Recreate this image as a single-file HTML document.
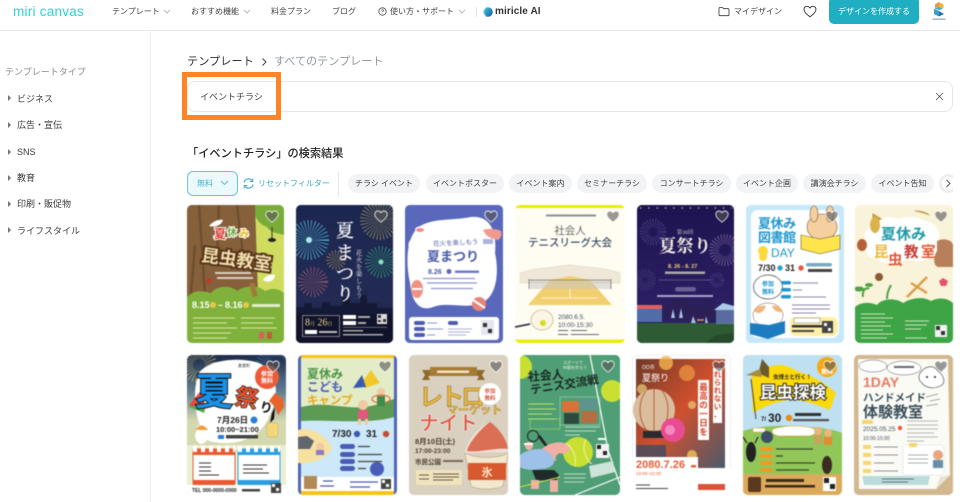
<!DOCTYPE html>
<html lang="ja"><head><meta charset="utf-8"><title>miri canvas</title>
<style>
*{box-sizing:border-box}
html,body{margin:0;padding:0;background:#fff}
body{width:960px;height:502px;position:relative;overflow:hidden;font-family:"Liberation Sans","Noto Sans CJK JP",sans-serif;color:#333}
.t{position:absolute;white-space:nowrap;line-height:1}
.nav{font-size:8px;color:#444;top:8px}
.side{font-size:9px;color:#3a3a3a;left:17px}
.tri{position:absolute;left:8px;width:0;height:0;border-left:3.5px solid #6d7680;border-top:3px solid transparent;border-bottom:3px solid transparent}
.chip{position:absolute;top:174px;height:19px;border-radius:10px;background:#f2f3f5;font-size:8px;color:#444;text-align:center;line-height:19px;white-space:nowrap}
.card{position:absolute;overflow:hidden;border-radius:5px;filter:blur(.4px)}
.card svg.c{position:absolute;left:0;top:0;display:block}
.card svg text{font-family:"Liberation Sans","Noto Sans CJK JP",sans-serif}
.card svg text.s{font-family:"Liberation Serif","Noto Serif CJK SC",serif}
.h{position:absolute;top:5px;width:14px;height:13px}
</style></head><body>
<svg width="0" height="0" style="position:absolute"><defs><symbol id="hrt" viewBox="0 0 14 13"><path d="M7 12.2C3 9 .8 6.900.8 4.200.8 2.300 2.300 1 4 1c1.300 0 2.300.6 3 1.700C7.700 1.600 8.700 1 10 1c1.700 0 3.200 1.300 3.200 3.200C13.200 6.900 11 9 7 12.200Z" fill="#555" fill-opacity=".6" stroke="#fff" stroke-opacity=".85" stroke-width=".9"/></symbol></defs></svg>

<!-- header -->
<div style="position:absolute;left:0;top:30px;width:960px;height:1px;background:#e8e8e8"></div>
<div style="position:absolute;left:150px;top:31px;width:1px;height:471px;background:#eee"></div>
<div class="t" style="left:13px;top:5px;font-size:13.500px;color:#2fd0d5;letter-spacing:.25px;font-weight:400">miri canvas</div>
<div class="t nav" style="left:112px">テンプレート</div>
<svg style="position:absolute;left:163px;top:9px" width="8" height="6"><path d="M1 1l3 3 3-3" fill="none" stroke="#aaa" stroke-width=".8"/></svg>
<div class="t nav" style="left:191px">おすすめ機能</div>
<svg style="position:absolute;left:243px;top:9px" width="8" height="6"><path d="M1 1l3 3 3-3" fill="none" stroke="#aaa" stroke-width=".8"/></svg>
<div class="t nav" style="left:271px">料金プラン</div>
<div class="t nav" style="left:332px">ブログ</div>
<svg style="position:absolute;left:378px;top:7px" width="9" height="9"><circle cx="4.500" cy="4.500" r="3.700" fill="none" stroke="#444" stroke-width=".8"/><path d="M3.500 3.500c.3-1 2-1 2 .1 0 .7-1 .8-1 1.500M4.500 6.200v.5" fill="none" stroke="#444" stroke-width=".7"/></svg>
<div class="t nav" style="left:390px">使い方・サポート</div>
<svg style="position:absolute;left:458px;top:9px" width="8" height="6"><path d="M1 1l3 3 3-3" fill="none" stroke="#aaa" stroke-width=".8"/></svg>
<div style="position:absolute;left:476px;top:7px;width:1px;height:10px;background:#e4e4e4"></div>
<svg style="position:absolute;left:482px;top:6px" width="12" height="12"><defs><linearGradient id="ma" x1="0" y1="0" x2="1" y2="1"><stop offset="0" stop-color="#47c6dc"/><stop offset="1" stop-color="#0f5fa8"/></linearGradient></defs><circle cx="6" cy="6" r="4.800" fill="url(#ma)"/><path d="M4 1.800a5 5 0 0 0 0 8.500" fill="none" stroke="#a8e6ee" stroke-width="1.200"/></svg>
<div class="t" style="left:495px;top:6.500px;font-size:10px;font-weight:700;color:#333;letter-spacing:.1px">miricle AI</div>
<svg style="position:absolute;left:718px;top:6px" width="12" height="11"><path d="M1 2.500c0-.6.400-1 1-1h2.500l1.200 1.200H10c.6 0 1 .4 1 1v5c0 .6-.4 1-1 1H2c-.6 0-1-.4-1-1Z" fill="none" stroke="#333" stroke-width=".8"/></svg>
<div class="t nav" style="left:734px">マイデザイン</div>
<svg style="position:absolute;left:803px;top:5px" width="14" height="13"><path d="M7 11.800C3.200 8.800 1 6.900 1 4.300 1 2.500 2.400 1.300 4 1.300c1.300 0 2.300.6 3 1.700.7-1.100 1.700-1.700 3-1.700 1.600 0 3 1.200 3 3 0 2.600-2.200 4.500-6 7.500Z" fill="none" stroke="#333" stroke-width=".9"/></svg>
<div style="position:absolute;left:829px;top:-3px;width:90px;height:26.500px;border-radius:5px;background:#20afc2;color:#fff;font-size:8px;text-align:center;line-height:29px">デザインを作成する</div>
<svg style="position:absolute;left:930px;top:1px" width="18" height="20"><path d="M9 1l4.500 2.500V7L9 8 5 5Z" fill="#f3b43c"/><path d="M5 3.500L9 1v4L5 7Z" fill="#ef8e4a"/><path d="M5 7l4-1 4 2-4 1-4-1Z" fill="#3fb1c9"/><path d="M4 8v5l5 2.500 5-2.500-5-3Z" fill="#2b6fb0"/><path d="M4 8l5 2.500V15L4 13Z" fill="#3f9fc2"/><rect x="2.500" y="17.500" width="13" height="1.300" fill="#9aa8c0"/></svg>

<!-- sidebar -->
<div class="t" style="left:5px;top:67.500px;font-size:9px;color:#8b8b8b">テンプレートタイプ</div>
<div class="tri" style="top:95px"></div><div class="t side" style="top:94.500px">ビジネス</div>
<div class="tri" style="top:122px"></div><div class="t side" style="top:121px">広告・宣伝</div>
<div class="tri" style="top:148.500px"></div><div class="t side" style="top:147.500px">SNS</div>
<div class="tri" style="top:175px"></div><div class="t side" style="top:174px">教育</div>
<div class="tri" style="top:201px"></div><div class="t side" style="top:200px">印刷・販促物</div>
<div class="tri" style="top:227px"></div><div class="t side" style="top:226.500px">ライフスタイル</div>

<!-- breadcrumb + search -->
<div class="t" style="left:187px;top:57px;font-size:11.200px;color:#333">テンプレート</div>
<svg style="position:absolute;left:261px;top:57px" width="7" height="10"><path d="M1.500 1.500l3.500 3.500-3.500 3.500" fill="none" stroke="#444" stroke-width="1"/></svg>
<div class="t" style="left:274px;top:57px;font-size:11.100px;color:#93989e">すべてのテンプレート</div>
<div style="position:absolute;left:187px;top:81px;width:766px;height:31px;border:1px solid #e6e6e6;border-radius:8px"></div>
<div style="position:absolute;left:182px;top:72px;width:99px;height:48px;border:5px solid #ff8426"></div>
<div class="t" style="left:200px;top:93px;font-size:9px;color:#444">イベントチラシ</div>
<svg style="position:absolute;left:935px;top:92px" width="9" height="9"><path d="M1 1l7 7M8 1L1 8" stroke="#555" stroke-width=".8"/></svg>

<div class="t" style="left:187px;top:149px;font-size:11.200px;color:#222;font-weight:500">「イベントチラシ」の検索結果</div>
<div style="position:absolute;left:187px;top:171px;width:51px;height:25px;background:#ebf9fc;border:1px solid #6dc3d8;border-radius:6px"></div>
<div class="t" style="left:197px;top:179.500px;font-size:8px;color:#4fb2ca">無料</div>
<svg style="position:absolute;left:220px;top:180px" width="9" height="6"><path d="M1 1l3.500 3.500L8 1" fill="none" stroke="#5bb6cd" stroke-width=".9"/></svg>
<svg style="position:absolute;left:242px;top:177px" width="13" height="13"><path d="M2 5.500A4.600 4.600 0 0 1 10 3.500M11 7.500A4.600 4.600 0 0 1 3 9.500" fill="none" stroke="#3aa9c0" stroke-width="1.100"/><path d="M10.800 1.500v3h-3M2.200 11.500v-3h3" fill="none" stroke="#3aa9c0" stroke-width="1"/></svg>
<div class="t" style="left:258px;top:179.500px;font-size:8px;color:#3aa9c0">リセットフィルター</div>
<div style="position:absolute;left:338px;top:172px;width:1px;height:24px;background:#e6e6e6"></div>
<div class="chip" style="left:348px;width:72px">チラシ イベント</div>
<div class="chip" style="left:426px;width:78px">イベントポスター</div>
<div class="chip" style="left:509px;width:63px">イベント案内</div>
<div class="chip" style="left:577px;width:70px">セミナーチラシ</div>
<div class="chip" style="left:652px;width:79px">コンサートチラシ</div>
<div class="chip" style="left:736px;width:62px">イベント企画</div>
<div class="chip" style="left:803px;width:63px">講演会チラシ</div>
<div class="chip" style="left:871px;width:63px">イベント告知</div>
<div style="position:absolute;left:939px;top:174px;width:14px;height:19px;overflow:hidden"><div style="width:19px;height:19px;border-radius:50%;background:#fff;border:3px solid #eceef0"></div><svg style="position:absolute;left:6px;top:5px" width="7" height="9"><path d="M1.500 1l3.500 3.500L1.500 8" fill="none" stroke="#555" stroke-width="1"/></svg></div>

<!-- CARD 1 -->
<div class="card" style="left:187px;top:205px;width:97px;height:138px;background:#80b23b">
<svg class="c" width="97" height="138">
<rect width="97" height="138" fill="#cfdc60"/><path d="M68 0H97V30C90 28 84 28 80 22 74 20 70 16 68 10Z" fill="#79ab38"/>
<path d="M0 0H68L71 90 0 95Z" fill="#85603a"/><path d="M12 0L18 90M32 0L30 60M50 0L56 50M8 40L4 90" stroke="#6a4c2f" stroke-width="2" fill="none"/>
<path d="M0 92C8 84 16 86 24 88 30 80 44 80 50 86 58 80 72 80 78 86 86 82 92 84 97 88V138H0Z" fill="#80b23b"/>
<path d="M22 21c4-5 10-7 14-6-1 4-6 8-14 6Z" fill="#fff"/><path d="M76 75c3-5 9-6 12-5 0 5-6 9-12 5Z" fill="#fff"/>
<path d="M85 22v12" stroke="#333"/><ellipse cx="85" cy="35" rx="4" ry="2" fill="#222"/>
<circle cx="22" cy="76" r="2.500" fill="#c4352a"/><rect x="64" y="78" width="5" height="14" fill="#a07a3a" transform="rotate(-15 66 85)"/>
<text x="27" y="33" font-size="12" font-weight="700" fill="#d6362a" stroke="#fff" stroke-width="2" paint-order="stroke">夏</text>
<text x="40" y="31" font-size="10" font-weight="700" fill="#6ea83a" stroke="#fff" stroke-width="2" paint-order="stroke">休</text>
<text x="52" y="32" font-size="10" font-weight="700" fill="#e9b91e" stroke="#fff" stroke-width="2" paint-order="stroke">み</text>
<text transform="translate(14 56) rotate(8)" font-size="17.500" font-weight="700" fill="#f1dfae" stroke="#57351b" stroke-width="4" paint-order="stroke">昆虫教室</text>
<rect x="28" y="67" width="36" height="2" fill="#fff" opacity=".7"/><rect x="30" y="72" width="36" height="2" fill="#fff" opacity=".7"/>
<text x="5" y="103" font-size="9" font-weight="700" fill="#fff">8.15</text><circle cx="26" cy="100" r="3" fill="#e4c94a"/><text x="31" y="103" font-size="8" font-weight="700" fill="#fff">~</text><text x="38" y="103" font-size="9" font-weight="700" fill="#fff">8.16</text><circle cx="59" cy="100" r="3" fill="#e4c94a"/><rect x="65" y="99" width="28" height="3" fill="#fff" opacity=".75"/>
<path d="M6 113H48M54 113H88M6 118H40M54 118H86M6 123H50M54 123H90M6 128H44M6 133H40" stroke="#d8e8a8" stroke-width="1"/>
<rect x="72" y="127" width="5" height="7" fill="#d0655a"/><rect x="80" y="127" width="5" height="7" fill="#b2643a"/>
</svg><svg class="h" style="left:78px"><use href="#hrt"/></svg></div>

<!-- CARD 2 -->
<div class="card" style="left:296px;top:205px;width:97px;height:138px;background:#1a2347">
<svg class="c" width="97" height="138">
<defs><linearGradient id="g2" x1="0" y1="0" x2="0" y2="1"><stop offset="0" stop-color="#1c2750"/><stop offset=".7" stop-color="#232b54"/><stop offset="1" stop-color="#14172e"/></linearGradient></defs>
<rect width="97" height="138" fill="url(#g2)"/>
<circle cx="13" cy="35" r="10" fill="none" stroke="#4fb0cf" stroke-width="20" stroke-dasharray=".5 1.500"/><circle cx="13" cy="35" r="3" fill="#a8eaf5"/>
<circle cx="84" cy="15" r="10" fill="none" stroke="#b3a65a" stroke-width="20" stroke-dasharray=".4 1.500"/>
<circle cx="85" cy="57" r="8" fill="none" stroke="#2f9a78" stroke-width="16" stroke-dasharray=".5 1.500"/><circle cx="85" cy="57" r="2.500" fill="#7fe8b4"/>
<circle cx="40" cy="55" r="5" fill="none" stroke="#b59a55" stroke-width="10" stroke-dasharray=".4 1.500"/>
<circle cx="17" cy="77" r="7.500" fill="none" stroke="#a5596f" stroke-width="15" stroke-dasharray=".5 1.600"/>
<path d="M0 110V102h8v-4h8v5h10v-6h8v4h12V92h8v6h10v-8h7v8h10v5h16v7Z" fill="#141a36"/>
<rect y="109" width="97" height="29" fill="#10132a"/>
<g fill="#fff" stroke="#fff" stroke-width=".25" text-anchor="middle"><text class="s" x="49" y="32" font-size="18">夏</text><text class="s" x="49" y="54" font-size="18">ま</text><text class="s" x="49" y="75" font-size="18">つ</text><text class="s" x="49" y="95" font-size="18">り</text></g>
<g fill="#e8e8ee" text-anchor="middle" font-size="6.500"><text class="s" x="63" y="50">花</text><text class="s" x="63" y="57">火</text><text class="s" x="63" y="64">を</text><text class="s" x="63" y="71">楽</text><text class="s" x="63" y="78">し</text><text class="s" x="63" y="85">も</text><text class="s" x="63" y="92">う</text></g>
<rect x="6.500" y="110.500" width="37" height="21" fill="none" stroke="#e6e6e6" stroke-width=".5"/>
<text class="s" x="9" y="120.500" font-size="10" fill="#f1d98a">8<tspan font-size="5">月</tspan> 26<tspan font-size="5">日</tspan></text>
<rect x="9" y="125" width="12" height="4" fill="#fff"/><rect x="23" y="126" width="18" height="2" fill="#bbb"/>
<rect x="47" y="110" width="13" height="4" fill="#fff"/><rect x="47" y="116" width="13" height="4" fill="#fff"/><rect x="62" y="111" width="12" height="2" fill="#aaa"/><rect x="62" y="117" width="8" height="2" fill="#aaa"/>
<rect x="81" y="109" width="10" height="10" fill="#ddd"/><path d="M82 110h3v3h-3ZM87 114h3v3h-3ZM82 115h3v2h-3Z" fill="#333"/>
<rect x="47" y="122" width="44" height=".6" fill="#999"/><rect x="47" y="125" width="20" height="1.500" fill="#aaa"/><rect x="47" y="129" width="40" height="1.500" fill="#aaa"/>
</svg><svg class="h" style="left:78px"><use href="#hrt"/></svg></div>

<!-- CARD 3 -->
<div class="card" style="left:405px;top:205px;width:98px;height:138px;background:#5a68bb">
<svg class="c" width="98" height="138">
<rect width="98" height="138" fill="#5a68bb"/>
<path d="M10 26C20 12 48 16 66 12 86 10 92 28 90 48 94 66 92 88 80 96 64 106 44 96 28 102 12 108 6 92 5 78 1 60 1 38 10 26Z" fill="#fff"/>
<path d="M4 37c2-4 8-6 12-4 4 3 5 8 2 12-3 3-9 3-12 0-3-2-3-5-2-8Z" fill="#fff"/>
<path d="M10 24c3-4 8-3 12-1 2 3-1 6-5 6-3 0-7-2-7-5Z" fill="#fff"/><ellipse cx="15" cy="25" rx="4" ry="2" fill="#f28a8a"/>
<path d="M78 25c6-2 14-1 18 1 1 4 0 7-3 9-6-1-12-3-15-10Z" fill="#f09a8f"/>
<rect x="78" y="34" width="10" height="5" fill="#5a68bb" opacity=".5"/>
<ellipse cx="12" cy="84" rx="6" ry="9" fill="#ef9385"/><path d="M7 84h10" stroke="#fff" stroke-width="2"/>
<circle cx="74" cy="99" r="7" fill="#e5857a"/><path d="M68 95l12 8" stroke="#fff" stroke-width="2"/>
<text x="28" y="40" font-size="6.500" fill="#5360a8" transform="rotate(-3 50 38)">花火を楽しもう</text>
<text x="22" y="56" font-size="13" font-weight="700" fill="#4a5aa8">夏まつり</text>
<text x="23" y="69" font-size="7" font-weight="700" fill="#4a5aa8">8.26</text><circle cx="44" cy="66.500" r="2.500" fill="#5a68bb"/><rect x="50" y="65.500" width="24" height="2.500" fill="#6f7ac2"/>
<path d="M18 73.500H70M22 78H72M26 83.500H68" stroke="#8e97cf" stroke-width="1.200"/>
<rect x="4" y="112" width="90" height="23" rx="3" fill="#fff"/>
<rect x="9" y="116" width="11" height="4" rx="2" fill="#4d5cb0"/><rect x="9" y="122" width="11" height="4" rx="2" fill="#4d5cb0"/><rect x="9" y="128" width="11" height="4" rx="2" fill="#4d5cb0"/>
<path d="M22 118h10M22 124h16M22 130h8" stroke="#8e97cf"/><rect x="43" y="116" width="10" height="4" rx="2" fill="#4d5cb0"/><path d="M43 124h24M43 127h22M43 130h18" stroke="#8e97cf" stroke-width=".8"/>
<rect x="76" y="115" width="13" height="15" fill="#e4e7f2"/><path d="M78 118h4v4h-4ZM83 124h4v4h-4Z" fill="#333"/>
</svg><svg class="h" style="left:79px"><use href="#hrt"/></svg></div>

<!-- CARD 4 -->
<div class="card" style="left:515px;top:205px;width:110px;height:138px;background:#fffdf1">
<svg class="c" width="110" height="138">
<rect width="110" height="138" fill="#fffdf1"/><rect width="110" height="3" fill="#e8ee0a"/><rect y="134.500" width="110" height="3.500" fill="#e8ee0a"/>
<rect x="31" y="9.500" width="50" height="2" fill="#8a8f9a"/>
<text x="55" y="29" font-size="10.500" text-anchor="middle" fill="#666">社会人</text>
<text x="55" y="41" font-size="10.500" text-anchor="middle" fill="#3c4b66" font-weight="500">テニスリーグ大会</text>
<path d="M5 68L20 64 55 60 90 64 105 68V78H5Z" fill="#efe8d8" stroke="#d8d0bc" stroke-width=".5"/>
<path d="M35 75L55 71 75 75 97 100H13Z" fill="#f2cf6f"/>
<rect x="14" y="75" width="82" height="9" fill="#c9c7c2" opacity=".55"/><path d="M14 75H96M14 84V74M96 84V74" stroke="#555" stroke-width=".6"/>
<path d="M27 93H83M55 84V93" stroke="#fff" stroke-width=".7"/>
<ellipse cx="27" cy="115" rx="11" ry="10" fill="#fbf5e6" stroke="#c9b88e" stroke-width=".8"/><circle cx="28" cy="118" r="3" fill="#d5dd20"/><path d="M0 122l15-3" stroke="#2f3a50" stroke-width="1.800"/>
<text x="43" y="114" font-size="6.500" fill="#3c4b66">2080.6.5.</text><text x="43" y="122" font-size="6.500" fill="#3c4b66">10:00-15:30</text>
<path d="M43 125.500h10M56 125.500h16M43 129.500h10M56 129.500h28" stroke="#667" stroke-width="1"/>
</svg><svg class="h" style="left:91px"><use href="#hrt"/></svg></div>

<!-- CARD 5 -->
<div class="card" style="left:637px;top:205px;width:97px;height:138px;background:#1e1552">
<svg class="c" width="97" height="138">
<defs><linearGradient id="g5" x1="0" y1="0" x2="0" y2="1"><stop offset="0" stop-color="#1c1450"/><stop offset=".75" stop-color="#2d1f63"/></linearGradient></defs>
<rect width="97" height="138" fill="url(#g5)"/>
<path d="M3 3H95" stroke="#e8d46a" stroke-width="1.300" stroke-dasharray="1.300 7"/>
<circle cx="16" cy="27" r="9" fill="none" stroke="#4a3f86" stroke-width="9" stroke-dasharray=".7 1.500"/><circle cx="88" cy="45" r="11" fill="none" stroke="#6b5a92" stroke-width="10" stroke-dasharray=".8 1.600"/><circle cx="8" cy="75" r="7" fill="none" stroke="#3f3a78" stroke-width="8" stroke-dasharray=".7 1.500"/><circle cx="80" cy="75" r="5" fill="none" stroke="#4a3f86" stroke-width="5" stroke-dasharray=".7 1.500"/>
<text class="s" x="48" y="29" font-size="5.500" text-anchor="middle" fill="#ddd">第30回</text>
<text class="s" x="48" y="47" font-size="17.500" text-anchor="middle" fill="#f4f0e6" font-weight="700">夏祭り</text>
<text x="31" y="63" font-size="5.500" fill="#f1cf74" font-weight="700">8. 26 - 8. 27</text><rect x="28" y="66.500" width="40" height="2.500" fill="#aaa"/><path d="M22 75H74" stroke="#8d86b2" stroke-width=".5"/>
<rect x="38" y="82" width="21" height="4.500" rx="2.200" fill="#6a5f96"/><rect x="20" y="90" width="56" height="2" fill="#a8a3c2"/>
<path d="M0 112V104h10v-6h12v4h14v-8h16v6h14v-4h10v10h21v10Z" fill="#2a2056"/>
<path d="M0 118H97V138H0Z" fill="#2f5b34"/><path d="M70 138c4-8 14-10 27-10v10Z" fill="#254a2b"/>
<rect x="0" y="100" width="25" height="4" fill="#e35f5f"/><rect y="104" width="25" height="13" fill="#5e87c4" opacity=".75"/>
<path d="M77 105l9-7 11 3v4Z" fill="#a9cbe8"/><rect x="79" y="105" width="18" height="14" fill="#7a9ed0" opacity=".6"/>
<path d="M34 113l2-9 2 9ZM42 113l2-10 2 10ZM54 118l2-7 3 7ZM68 118l1-7 2 7Z" fill="#a6c3e0"/><rect x="60" y="114" width="7" height="2" fill="#b67b5a"/>
</svg><svg class="h" style="left:78px"><use href="#hrt"/></svg></div>

<!-- CARD 6 -->
<div class="card" style="left:746px;top:205px;width:98px;height:138px;background:#c6e8fb">
<svg class="c" width="98" height="138">
<rect x="5" y="5" width="88" height="128" rx="7" fill="#fff"/>
<text x="12" y="23" font-size="13" font-weight="700" fill="#1f96cd" letter-spacing="-.5">夏休み</text><text x="12" y="37" font-size="13" font-weight="700" fill="#1f96cd" letter-spacing="-.5">図書館</text>
<circle cx="17" cy="46" r="5" fill="#ffd83a"/><circle cx="17" cy="52" r="4" fill="#ffd83a"/><text x="25" y="52" font-size="12" fill="#1f96cd">DAY</text>
<ellipse cx="76" cy="22" rx="15" ry="13" fill="#f4cfa0" stroke="#7c5a3e" stroke-width=".6"/><ellipse cx="68" cy="9" rx="4" ry="8" fill="#f4cfa0" stroke="#7c5a3e" stroke-width=".6"/><ellipse cx="84" cy="9" rx="4" ry="8" fill="#f4cfa0" stroke="#7c5a3e" stroke-width=".6"/>
<path d="M55 30l19 4 20-4v14l-20 5-19-5Z" fill="#ffe44b" stroke="#6b5a3e" stroke-width=".6"/>
<text x="12" y="66" font-size="9" font-weight="700" fill="#222">7/30</text><circle cx="34" cy="63" r="2.700" fill="#2ba6c9"/><text x="39" y="66" font-size="9" font-weight="700" fill="#222">31</text><circle cx="55" cy="63" r="2.700" fill="#e8563f"/>
<rect x="60" y="58" width="26" height="3.500" rx="1.700" fill="#7aa9c2"/><rect x="62" y="64" width="24" height="3" fill="#444"/>
<ellipse cx="22" cy="82" rx="14.500" ry="12" fill="#fff" stroke="#444" stroke-width=".7"/>
<text x="22" y="81" font-size="6" text-anchor="middle" font-weight="700" fill="#1f96cd">参加</text><text x="22" y="89" font-size="6" text-anchor="middle" font-weight="700" fill="#1f96cd">無料</text>
<rect x="35" y="76" width="10" height="3.500" rx="1.700" fill="#1f96cd"/><rect x="35" y="83" width="10" height="3.500" rx="1.700" fill="#1f96cd"/><rect x="35" y="90" width="10" height="3.500" rx="1.700" fill="#1f96cd"/>
<path d="M47 78H72M47 85H56M47 92H80M46 100H84M46 104H84M46 108H70" stroke="#88a" stroke-width=".9"/>
<ellipse cx="22" cy="110" rx="15" ry="12" fill="#fff" stroke="#7c5a3e" stroke-width=".5"/><path d="M8 106c2-5 8-6 12-5-2 5-6 10-12 5ZM26 101c4-1 10 1 11 6-5 1-10-2-11-6Z" fill="#f0b77c"/>
<path d="M4 118l19 2 16-4v12l-17 6-18-5Z" fill="#1d7cc0"/>
<rect x="44" y="112" width="48" height="19" rx="6" fill="#fdeea8"/><rect x="48" y="113" width="26" height="5" fill="#fff" stroke="#555" stroke-width=".4"/><rect x="46" y="120" width="30" height="2.500" fill="#333"/><rect x="46" y="125" width="22" height="2" fill="#444"/><rect x="76" y="116" width="11" height="12" fill="#444"/><path d="M78 118h3v3h-3ZM82 123h3v3h-3Z" fill="#fff"/>
</svg><svg class="h" style="left:79px"><use href="#hrt"/></svg></div>

<!-- CARD 7 -->
<div class="card" style="left:855px;top:205px;width:98px;height:138px;background:#f9f3d9">
<svg class="c" width="98" height="138">
<rect width="98" height="138" fill="#f9f3d9"/>
<path d="M24 14c10-3 12-2 20 0 8-4 20-2 26 2 10 1 16 10 14 18 6 6 2 16-8 18-8 6-18 4-24 2-10 6-24 6-30 0-8 0-14-8-10-14-6-8 0-20 12-26Z" fill="#fff"/>
<path d="M82 36c8-4 16 0 16 4v22H84c-6 0-6-10-2-16Z" fill="#b77f5a"/>
<text x="26" y="34" font-size="15" font-weight="700" fill="#1d9aa6" letter-spacing="0">夏休み</text>
<text x="19" y="52" font-size="14.500" font-weight="700" fill="#ebb73e">昆</text><text x="33" y="60" font-size="14.500" font-weight="700" fill="#e15835">虫</text><text x="49" y="52" font-size="14.500" font-weight="700" fill="#c63a34">教</text><text x="66" y="52" font-size="14.500" font-weight="700" fill="#e15835">室</text>
<path d="M52 92l20-20M56 78l16 10" stroke="#dc9d4a" stroke-width="2.500"/>
<path d="M8 92c-1-8 4-10 6-8M32 94c0-8 3-12 4-14" stroke="#4fa048" stroke-width="2" fill="none"/><ellipse cx="4" cy="84" rx="5" ry="2.500" fill="#4fa048"/><ellipse cx="14" cy="80" rx="4" ry="2" fill="#4fa048"/><path d="M84 76l4-3 5 3-2 5h-5Z" fill="#e3546a"/>
<path d="M18 9l8 5-8 4ZM60 6c6 0 10 1 14 4" stroke="#b9913c" fill="#d0a84c"/><ellipse cx="20" cy="20" rx="5" ry="8" fill="#dcb34a"/><ellipse cx="7" cy="40" rx="5" ry="6" fill="#b45f36"/><ellipse cx="24" cy="72" rx="4" ry="4" fill="#8a5a34"/>
<path d="M0 102c4-4 14-6 22-2 4-6 18-8 26-2 8-5 20-7 28-2 8-4 16-3 22 2v40H0Z" fill="#3ea445"/>
<path d="M6 109H30M6 113H38M6 117H30M6 121H36M6 125H28M6 129H38M6 133H32M50 116H74M50 120H72M50 124H66M50 133H72" stroke="#cce5be" stroke-width="1"/>
<rect x="80" y="120" width="12" height="12" fill="#f3f3f3"/><path d="M81 121h4v4h-4ZM86 126h4v4h-4Z" fill="#333"/>
</svg><svg class="h" style="left:79px"><use href="#hrt"/></svg></div>

<!-- CARD 8 -->
<div class="card" style="left:187px;top:355px;width:99px;height:140px;background:#fff;box-shadow:inset 0 0 0 1px #eee">
<svg class="c" width="99" height="140">
<defs><linearGradient id="g8" x1="0" y1="0" x2="0" y2="1"><stop offset="0" stop-color="#1b2a4a"/><stop offset=".4" stop-color="#65828f"/><stop offset=".7" stop-color="#d4d8ae"/></linearGradient></defs>
<rect width="99" height="94" fill="url(#g8)"/>
<circle cx="90" cy="12" r="16" fill="none" stroke="#4c6fb0" stroke-width="12" stroke-dasharray=".6 2"/><circle cx="12" cy="10" r="12" fill="none" stroke="#c7b46a" stroke-width="12" stroke-dasharray=".6 2"/>
<path d="M12 18C22 4 54 2 72 8 90 16 94 40 82 62 72 86 44 92 22 86 8 70 4 38 12 18Z" fill="#fff"/>
<path d="M2 50l14-17 2 22Z" fill="#e74b3d"/><path d="M2 50l16 5-1 3-15-6Z" fill="#4bb24a"/>
<text x="8" y="50" font-size="38" font-weight="700" fill="#1991e6" stroke="#111" stroke-width="1.800" paint-order="stroke">夏</text>
<text transform="translate(47 49) rotate(10)" font-size="23" font-weight="700" fill="#e8542c" stroke="#111" stroke-width="1.200" paint-order="stroke">祭</text>
<text transform="translate(72 56) rotate(10)" font-size="13" font-weight="700" fill="#111">り</text>
<circle cx="80" cy="22" r="12" fill="#ec5b3a"/><text x="80" y="21" font-size="6" font-weight="700" text-anchor="middle" fill="#fff">参加</text><text x="80" y="28" font-size="6" font-weight="700" text-anchor="middle" fill="#fff">無料</text>
<text x="57" y="12" font-size="4" text-anchor="middle" fill="#222">美里町</text>
<path d="M88 38l8 6 1 8-6 8-3-8-6-6Z" fill="#e8642a"/><path d="M88 52l-1 12-4 4 2-10Z" fill="#111"/>
<text x="30" y="68" font-size="8.500" font-weight="700" fill="#222">7月26日</text><circle cx="67" cy="65" r="3.500" fill="#2b7fd0"/>
<text x="29" y="77" font-size="7.500" font-weight="700" fill="#222">10:00~21:00</text><rect x="31" y="80" width="6" height="4" fill="#2b7fd0"/><rect x="39" y="80" width="32" height="3.500" fill="#444"/>
<path d="M11 70l8 5 2 8c-1 5-6 6-8 6-5-3-6-9-4-12Z" fill="#fff"/><path d="M9 75c3-6 8-6 12 0Z" fill="#ef9f42"/>
<rect x="80" y="68" width="11" height="14" rx="2" fill="#f2d77a" stroke="#c9ad5a" stroke-width=".5"/>
<rect y="90" width="99" height="50" fill="#ecf0d3"/>
<rect x="6" y="94" width="42" height="36" rx="2" fill="#fff" stroke="#ea5a32" stroke-width="1"/><path d="M6 94h42v6H6Z" fill="#ea5a32"/><path d="M6 94h42" stroke="#fff" stroke-width="6" stroke-dasharray="4 4"/>
<rect x="51" y="94" width="42" height="36" rx="2" fill="#fff" stroke="#2d9ee0" stroke-width="1"/><path d="M51 94h42v6H51Z" fill="#2d9ee0"/><path d="M51 94h42" stroke="#fff" stroke-width="6" stroke-dasharray="4 4"/>
<path d="M12 108H24M12 112H24M12 116H24M12 120H32M56 110H80M56 114H76M56 118H82" stroke="#333" stroke-width="1"/>
<rect x="6" y="125" width="42" height="5" fill="#ea5a32"/><rect x="51" y="125" width="42" height="5" fill="#2d9ee0"/>
<rect y="130" width="99" height="10" fill="#fff"/><text x="5" y="137" font-size="5" fill="#222" font-weight="700">TEL 000-0000-0000</text><rect x="55" y="134" width="18" height="2.500" fill="#444"/><rect x="84" y="128" width="10" height="10" fill="#444"/><path d="M85 129h3v3h-3ZM89 133h3v3h-3Z" fill="#fff"/>
</svg><svg class="h" style="left:79px"><use href="#hrt"/></svg></div>

<!-- CARD 9 -->
<div class="card" style="left:298px;top:355px;width:99px;height:140px;background:#cde8f8">
<svg class="c" width="99" height="140">
<rect width="99" height="140" fill="#cde8f8"/><rect width="99" height="3" fill="#f6c31c"/><rect y="136" width="99" height="4" fill="#f6c31c"/><rect x="0" width="3" height="140" fill="#5165b8"/><rect x="96" width="3" height="140" fill="#5165b8"/>
<path d="M3 3H96V60C80 68 50 58 30 62 16 64 10 62 3 60Z" fill="#e2ecc6"/>
<path d="M3 52C20 48 30 50 50 52 70 54 84 48 96 44V62C70 70 30 64 3 66Z" fill="#5d9a54"/>
<path d="M62 30L73 15 82 28 67 33Z" fill="#f2c92a"/><path d="M55 33L64 20 68 32Z" fill="#3b59b0"/>
<text x="9" y="23" font-size="12" font-weight="700" fill="#4a9448">夏休み</text><text x="9" y="36" font-size="12" font-weight="700" fill="#4b5cb8">こども</text><text x="9" y="49" font-size="11.500" font-weight="700" fill="#e9a921">キャンプ</text>
<ellipse cx="65" cy="50" rx="5" ry="5" fill="#f2c9a4"/><path d="M60 55h10v9h-10Z" fill="#e2587a"/><rect x="60" y="64" width="3" height="6" fill="#f2c9a4"/><rect x="67" y="64" width="3" height="6" fill="#f2c9a4"/>
<circle cx="83" cy="37" r="4" fill="#f2c9a4"/><ellipse cx="83" cy="44" rx="9" ry="4" fill="none" stroke="#ea7240" stroke-width="1.300"/><rect x="79" y="41" width="8" height="10" fill="#3f8a4c"/>
<path d="M0 75c14-4 28 6 34 18-6 12-22 16-34 15Z" fill="#f7e1a0"/><path d="M0 82l9-1 7 5-4 8H0Z" fill="#60666e"/><circle cx="22" cy="92" r="4" fill="#f2c9a4"/><rect x="18" y="95" width="8" height="5" fill="#8a7cc2"/>
<text x="34" y="82" font-size="10" font-weight="700" fill="#222">7/30</text><circle cx="59" cy="79" r="3.200" fill="#3d5bb0"/><text x="68" y="82" font-size="10" font-weight="700" fill="#222">31</text><circle cx="88" cy="79" r="3.200" fill="#c64c38"/>
<rect x="42" y="89" width="15" height="5" rx="2.500" fill="#4a5cb5"/><rect x="42" y="97" width="15" height="5" rx="2.500" fill="#4a5cb5"/><rect x="42" y="104" width="15" height="5" rx="2.500" fill="#4a5cb5"/><rect x="42" y="111" width="15" height="5" rx="2.500" fill="#4a5cb5"/>
<path d="M60 91.500H72M60 99.500H84M60 106.500H84M60 113.500H68" stroke="#444" stroke-width="1.200"/><circle cx="79" cy="114" r="7" fill="#4a5cb5"/>
<rect x="3" y="122" width="93" height="14" fill="#fff"/><rect x="6" y="121" width="13" height="13" fill="#b18a56"/><path d="M25 126h10M22 131h14M52 127H80M52 132H72" stroke="#4a5cb5" stroke-width="1.200"/><rect x="83" y="124" width="10" height="10" fill="#444"/><path d="M84 125h3v3h-3ZM88 129h3v3h-3Z" fill="#fff"/>
</svg><svg class="h" style="left:80px"><use href="#hrt"/></svg></div>

<!-- CARD 10 -->
<div class="card" style="left:409px;top:355px;width:99px;height:140px;background:#d9d0bf">
<svg class="c" width="99" height="140">
<rect width="99" height="140" fill="#d9d0bf"/>
<path d="M13 15h10v6l-4 0 2 4H13l3-5ZM76 15H66v6h4l-2 4h8l-3-5Z" fill="#8e6a2c"/><rect x="21" y="12" width="47" height="9" fill="#a77b34"/><rect x="28" y="15.500" width="32" height="2.500" fill="#f1e4c3"/>
<text x="10" y="50" font-size="24" font-weight="700" fill="#e5b53e" stroke="#8e6a2c" stroke-width=".5" letter-spacing="-3">レトロ</text>
<circle cx="81" cy="39" r="11" fill="#fff"/><text x="81" y="38" font-size="5.500" font-weight="700" text-anchor="middle" fill="#d25b44">参加</text><text x="81" y="45" font-size="5.500" font-weight="700" text-anchor="middle" fill="#d25b44">無料</text>
<text x="38" y="58.500" font-size="11" font-weight="700" fill="#e5b53e" stroke="#8e6a2c" stroke-width=".3">マーケット</text>
<text x="10" y="75" font-size="20" font-weight="700" fill="#d95b45" stroke="#fff" stroke-width=".5" letter-spacing="-.5">ナイト</text>
<text x="6" y="89" font-size="7.500" font-weight="700" fill="#4e3e30">8月10日(土)</text><text x="6" y="98" font-size="6.500" font-weight="700" fill="#4e3e30">17:00-23:00</text>
<text x="6" y="109" font-size="6.500" font-weight="700" fill="#4e3e30">市民公園</text><rect x="34" y="105" width="20" height="2" fill="#7a6a58"/>
<rect x="7" y="115" width="46" height="15" fill="#f0e4bd"/><path d="M24 119h26M24 122h26M24 125h20M10 120h10M10 124h10" stroke="#6a5a48" stroke-width=".9"/>
<path d="M56 98c2-14 16-28 25-31 8 6 16 18 18 30Z" fill="#f0dfd8"/><path d="M58 96c2-10 18-26 23-29 6 4 16 14 18 27-10-2-30 4-41 2Z" fill="#db6f56"/>
<path d="M56 98c10 6 34 6 43 0l-5 33c-8 4-26 4-32 0Z" fill="#f3e8cd" stroke="#a89878" stroke-width=".5"/><rect x="59" y="108" width="38" height="17" fill="#d8582f"/><text x="78" y="121" font-size="11" font-weight="700" text-anchor="middle" fill="#f8eecc">氷</text>
</svg><svg class="h" style="left:80px"><use href="#hrt"/></svg></div>

<!-- CARD 11 -->
<div class="card" style="left:520px;top:355px;width:100px;height:140px;background:#4f9e76">
<svg class="c" width="100" height="140">
<rect width="100" height="140" fill="#4f9e76"/>
<circle cx="0" cy="12" r="12" fill="#c9e033"/><circle cx="92" cy="36" r="11" fill="#c9e033"/>
<path d="M70 0L88 95 100 130M55 140L100 122" stroke="#fff" stroke-width="1.200" fill="none"/>
<text transform="translate(8 26) rotate(-4)" font-size="12" font-weight="700" fill="#1a2a22">社会人</text>
<text transform="translate(11 39) rotate(-9)" font-size="11.500" font-weight="700" fill="#1a2a22">テニス交流戦</text>
<text x="43" y="9" font-size="4" fill="#e8f4d8">スポーツで</text><text x="43" y="14" font-size="4" fill="#e8f4d8">仲間を作ろう</text>
<path d="M8 49H34M8 54H36M8 59H32M8 64H36" stroke="#b8e25a" stroke-width="1"/>
<rect x="40" y="42" width="40" height="28" fill="none" stroke="#dcefd8" stroke-width=".4"/><rect x="42" y="46" width="17" height="11" fill="#d87238"/><rect x="60" y="44" width="17" height="11" fill="#5e9490"/><rect x="44" y="58" width="15" height="11" fill="#2e4a40"/><rect x="61" y="56" width="16" height="12" fill="#b46e42"/>
<rect x="10" y="64" width="30" height="10" fill="none" stroke="#b8e25a" stroke-width=".5"/><path d="M45 72H80M45 76H76M45 80H60" stroke="#e2f0d8" stroke-width=".8"/>
<circle cx="58" cy="97" r="15" fill="#c9e033"/><path d="M45 88c8 4 12 14 10 23M66 84c-4 8-2 20 6 25" stroke="#eef5a0" fill="none"/>
<ellipse cx="13" cy="81" rx="5.500" ry="5.500" fill="none" stroke="#222" stroke-width="1"/>
<path d="M20 80l8 11-1 3-9-12Z" fill="#222"/>
<path d="M34 88c6-2 14 0 16 6-2 4-6 6-10 4-6 2-4 8-4 8l-20-2c0-4 6-14 18-16Z" fill="#f1afa4"/>
<path d="M0 100c5-4 12-6 20-6 6 0 14 6 14 12s-8 8-14 8c-8 2-18 0-20-2Z" fill="#9ec1ea"/>
<circle cx="9" cy="91" r="4" fill="#f1afa4"/><rect x="4" y="88" width="9" height="2" fill="#fff"/>
<path d="M12 115h22l5 5-3 6-20-1Z" fill="#1f2a2a"/><rect x="11" y="125" width="8" height="9" fill="#f1afa4"/><rect x="30" y="125" width="8" height="12" fill="#f1afa4"/>
<path d="M0 132L40 122" stroke="#d5e04a" stroke-width="1"/>
<rect x="78" y="83" width="8" height="2" fill="#fff"/><rect x="76" y="89" width="13" height="14" fill="#f3f3f3"/><path d="M77 90h4v4h-4ZM83 96h4v4h-4Z" fill="#222"/>
<path d="M69 111l24-5 2 11-24 6Z" fill="#cfe4d8"/><path d="M44 119H66M44 123H66M44 127H64" stroke="#e2f0d8" stroke-width=".8"/>
</svg><svg class="h" style="left:81px"><use href="#hrt"/></svg></div>

<!-- CARD 12 -->
<div class="card" style="left:632px;top:355px;width:99px;height:140px;background:#fff;box-shadow:inset 0 0 0 1px #eee">
<svg class="c" width="99" height="140">
<defs><linearGradient id="g12" x1="0" y1="0" x2="1" y2="1"><stop offset="0" stop-color="#6e3a2a"/><stop offset=".5" stop-color="#d0502e"/><stop offset="1" stop-color="#4a5a6a"/></linearGradient></defs>
<rect x="4" y="4" width="89" height="109" fill="url(#g12)"/>
<circle cx="34" cy="8" r="7" fill="#f2b44e" opacity=".8"/><circle cx="55" cy="18" r="8" fill="#f09a42" opacity=".7"/><circle cx="60" cy="100" r="5" fill="#f4c35c" opacity=".8"/><circle cx="10" cy="34" r="5" fill="#e8d07a" opacity=".7"/><circle cx="60" cy="50" r="4" fill="#e8d07a" opacity=".7"/><rect x="4" y="90" width="30" height="23" fill="#2b4a6a" opacity=".7"/>
<ellipse cx="22" cy="55" rx="21" ry="21" fill="#d9bd9c"/><path d="M14 36c-8 10-8 28 0 38M30 36c8 10 8 28 0 38M22 34v42" stroke="#b76042" fill="none"/><rect x="11" y="76" width="22" height="7" fill="#2b2a2e"/>
<circle cx="41" cy="75" r="12" fill="#e94b93"/><circle cx="38" cy="75" r="5" fill="#f28ac0"/>
<text x="10" y="14" font-size="5" fill="#fff">OO市</text><text x="10" y="26" font-size="9" fill="#fff">夏祭り</text>
<rect x="81" y="13" width="9" height="55" fill="#fff"/><rect x="66" y="25" width="11" height="60" fill="#fff"/>
<g font-size="7.500" fill="#d2462a" font-weight="700" text-anchor="middle"><text x="85.500" y="22">れ</text><text x="85.500" y="30">ら</text><text x="85.500" y="38">れ</text><text x="85.500" y="46">な</text><text x="85.500" y="54">い</text><text x="85.500" y="62">、</text></g>
<g font-size="8.500" fill="#d2462a" font-weight="700" text-anchor="middle"><text x="71.500" y="35">最</text><text x="71.500" y="44">高</text><text x="71.500" y="53">の</text><text x="71.500" y="62">一</text><text x="71.500" y="71">日</text><text x="71.500" y="80">を</text></g>
<rect x="0" y="102" width="66" height="38" fill="#fff"/><rect x="0" y="113" width="99" height="27" fill="#fff"/>
<text x="4" y="113" font-size="11" font-weight="700" fill="#e85c36">2080.7.26</text><rect x="59" y="110" width="5" height="2.500" fill="#e85c36"/>
<text x="4" y="120" font-size="4.500" fill="#e85c36">10:00~22:00</text>
<path d="M4 130H18M4 133.500H36" stroke="#444" stroke-width="1"/><rect x="66" y="129" width="27" height="6" fill="#d9523a"/>
</svg><svg class="h" style="left:80px"><use href="#hrt"/></svg></div>

<!-- CARD 13 -->
<div class="card" style="left:743px;top:355px;width:99px;height:140px;background:#b9dcee">
<svg class="c" width="99" height="140">
<rect width="99" height="140" fill="#bee0f0"/>
<path d="M0 76c20-6 40-6 60-4 14 0 30 2 39 6v44H0Z" fill="#91c659"/>
<path d="M8 23C18 14 28 10 37 10 46 10 52 16 60 18 72 22 84 30 93 38L87 55C74 50 60 44 47 45 34 46 20 52 10 58Z" fill="#fcd90c"/><path d="M8 24l5 40" stroke="#444"/>
<circle cx="84" cy="12" r="10" fill="#f7a912"/><text x="84" y="19" font-size="6" font-weight="700" text-anchor="middle" fill="#fff">無料</text>
<path d="M16 16l3-12 7 8 0 11-9-4Z" fill="#6b5a2c"/><path d="M3 20l14-6 2 8Z" fill="#a68c3e"/>
<text x="30" y="24" font-size="5.500" font-weight="700" fill="#222">虫博士と行く！</text>
<text transform="translate(17 43)" font-size="16.500" font-weight="700" fill="#fff" stroke="#2c2c22" stroke-width="2" paint-order="stroke">昆虫探検</text>
<text x="18" y="66" font-size="6" font-weight="700" fill="#222">7/</text><text x="25" y="67" font-size="12" font-weight="700" fill="#222">30</text><circle cx="46" cy="63" r="3.200" fill="#e58c16"/>
<rect x="52" y="58" width="26" height="3" fill="#333"/><rect x="50" y="64" width="36" height="2.200" fill="#555"/>
<rect x="10" y="73" width="12" height="4" fill="#fff" stroke="#ea8a16" stroke-width=".4"/>
<path d="M30 74c12-4 32-4 42 0 2 3 0 6-6 7H36c-6-1-8-4-6-7Z" fill="#fff" stroke="#ea8a16" stroke-width=".5"/><circle cx="24" cy="82" r="6" fill="#3c4f64"/>
<ellipse cx="8" cy="97" rx="5" ry="10" fill="#222"/><path d="M4 88L0 82M12 88l3-6" stroke="#222" stroke-width="1.200"/>
<ellipse cx="84" cy="110" rx="5" ry="9" fill="#3a2c22"/>
<circle cx="75" cy="76" r="4" fill="#e9b67e"/><rect x="71" y="80" width="8" height="9" fill="#c9a45c"/><circle cx="85" cy="78" r="4" fill="#e9b67e"/><rect x="81" y="82" width="8" height="8" fill="#e78a32"/>
<rect x="17" y="92" width="13" height="4" rx="2" fill="#f09a24"/><rect x="17" y="99" width="13" height="4" rx="2" fill="#f09a24"/><rect x="17" y="106" width="13" height="4" rx="2" fill="#f09a24"/><rect x="17" y="113" width="13" height="4" rx="2" fill="#f09a24"/>
<path d="M33 94H70M33 101H40M33 108H72M33 115H66" stroke="#3a4a2a" stroke-width="1.200"/>
<rect y="119" width="99" height="21" fill="#dcaa5c"/><rect x="5" y="122" width="13" height="15" rx="2" fill="#5a3a1e"/><rect x="23" y="124" width="38" height="3" fill="#3a2a16"/><rect x="22" y="130" width="50" height="2.500" fill="#3a2a16"/><rect x="80" y="122" width="13" height="14" fill="#fff"/><path d="M81 123h5v5h-5ZM87 129h5v5h-5Z" fill="#222"/>
</svg><svg class="h" style="left:80px"><use href="#hrt"/></svg></div>

<!-- CARD 14 -->
<div class="card" style="left:854px;top:355px;width:99px;height:140px;background:#d2b78f">
<svg class="c" width="99" height="140">
<rect width="99" height="140" fill="#d2b78f"/>
<path d="M4 4H94L96 120 82 134H5Z" fill="#fbfbf5"/><path d="M96 120L82 134l4-12Z" fill="#e8e2d6"/>
<ellipse cx="19" cy="11" rx="14" ry="6" fill="#fff" stroke="#555" stroke-width=".5"/><ellipse cx="50" cy="13" rx="17" ry="7" fill="#fff" stroke="#555" stroke-width=".5"/><rect x="40" y="11" width="20" height="2" fill="#666"/>
<path d="M66 18c6-8 14-8 18-2 5 4 8 10 4 14-6 4-16 4-20-2-3-2-4-6-2-10Z" fill="#fff" stroke="#555" stroke-width=".7"/><circle cx="73" cy="22" r="1" fill="#222"/><circle cx="81" cy="22" r="1" fill="#222"/>
<text x="9" y="32" font-size="14" font-weight="700" fill="#ea7a64">1DAY</text>
<text x="9" y="46" font-size="10.500" font-weight="700" fill="#3d4f5c">ハンドメイド</text>
<text x="9" y="62" font-size="15" font-weight="700" fill="#3d4f5c">体験教室</text>
<rect x="8" y="65" width="11" height="4" fill="#f6d670"/>
<text x="9" y="76" font-size="6.500" fill="#3d4f5c">2025.05.25</text><circle cx="46" cy="73" r="2.200" fill="#e85c36"/>
<text x="9" y="85" font-size="5" fill="#3d4f5c">10:00-15:00</text>
<path d="M53 66H84M53 70H84M53 74H84M53 78H80M53 82H84M53 86H70" stroke="#9aa3a8" stroke-width=".8"/>
<rect x="9" y="90" width="8" height="4" fill="#f6d670"/><rect x="9" y="98" width="8" height="4" fill="#f6d670"/><rect x="9" y="106" width="8" height="4" fill="#f6d670"/><rect x="9" y="114" width="8" height="4" fill="#f6d670"/>
<path d="M20 92H44M20 100H44M20 108H40M20 116H44" stroke="#8a9398" stroke-width="1"/>
<rect x="49" y="90" width="41" height="30" rx="3" fill="#fff" stroke="#d8d8d0" stroke-width=".5"/><rect x="55" y="88" width="8" height="4" fill="#f6d670"/><circle cx="84" cy="100" r="5" fill="#e6a77f"/><rect x="79" y="105" width="10" height="8" fill="#6a8ea8"/><path d="M54 100H74M54 104H74M54 108H74" stroke="#8a9398" stroke-width=".8"/>
<path d="M8 121H76L74 130H10Z" fill="#bcdcdc"/><path d="M28 124H60M28 127H54" stroke="#3d4f5c" stroke-width=".8"/>
<path d="M72 42L84 39M76 46L86 44M72 51L84 49" stroke="#555" stroke-width=".5"/>
</svg><svg class="h" style="left:80px"><use href="#hrt"/></svg></div>
</body></html>
